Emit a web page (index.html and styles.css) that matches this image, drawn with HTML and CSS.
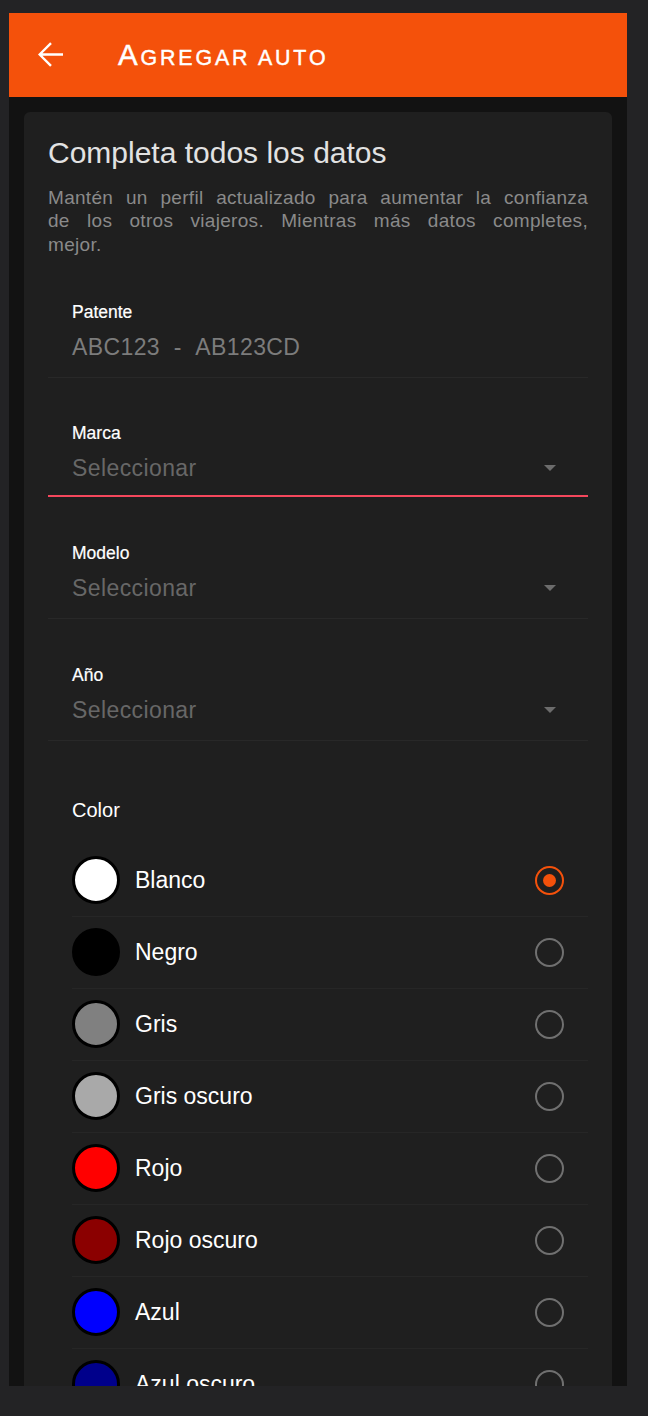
FILE: index.html
```html
<!DOCTYPE html>
<html lang="es">
<head>
<meta charset="utf-8">
<title>Agregar auto</title>
<link rel="stylesheet" href="styles.css">
</head>
<body>
<div class="frame">
  <header class="toolbar">
    <svg class="back" width="26" height="26" viewBox="0 0 26 26" aria-hidden="true">
      <path d="M1.5 12.5 H25 M13 1.2 L1.6 12.5 L13 23.8" fill="none" stroke="#fff" stroke-width="2.4" stroke-linejoin="miter"/>
    </svg>
    <h1 class="title"><span class="title-cap">A</span>gregar auto</h1>
  </header>
  <main class="content">
    <section class="card">
      <h2 class="card-title">Completa todos los datos</h2>
      <p class="card-desc">Mantén un perfil actualizado para aumentar la confianza<br>de los otros viajeros. Mientras más datos completes,<br>mejor.</p>

      <div class="field field--first">
        <div class="field-label">Patente</div>
        <div class="field-row"><span class="field-value">ABC123&nbsp; - &nbsp;AB123CD</span></div>
      </div>

      <div class="field field--focused">
        <div class="field-label">Marca</div>
        <div class="field-row"><span class="field-value field-value--placeholder">Seleccionar</span><span class="caret"></span></div>
      </div>

      <div class="field">
        <div class="field-label">Modelo</div>
        <div class="field-row"><span class="field-value field-value--placeholder">Seleccionar</span><span class="caret"></span></div>
      </div>

      <div class="field">
        <div class="field-label">Año</div>
        <div class="field-row"><span class="field-value field-value--placeholder">Seleccionar</span><span class="caret"></span></div>
      </div>

      <div class="color-label">Color</div>
      <ul class="color-list">
        <li class="color-item"><span class="swatch swatch--blanco"></span><span class="color-name">Blanco</span><span class="radio radio--checked"></span></li>
        <li class="color-item"><span class="swatch swatch--negro"></span><span class="color-name">Negro</span><span class="radio"></span></li>
        <li class="color-item"><span class="swatch swatch--gris"></span><span class="color-name">Gris</span><span class="radio"></span></li>
        <li class="color-item"><span class="swatch swatch--gris-oscuro"></span><span class="color-name">Gris oscuro</span><span class="radio"></span></li>
        <li class="color-item"><span class="swatch swatch--rojo"></span><span class="color-name">Rojo</span><span class="radio"></span></li>
        <li class="color-item"><span class="swatch swatch--rojo-oscuro"></span><span class="color-name">Rojo oscuro</span><span class="radio"></span></li>
        <li class="color-item"><span class="swatch swatch--azul"></span><span class="color-name">Azul</span><span class="radio"></span></li>
        <li class="color-item"><span class="swatch swatch--azul-oscuro"></span><span class="color-name">Azul oscuro</span><span class="radio"></span></li>
      </ul>
    </section>
  </main>
</div>
</body>
</html>
```
FILE: styles.css
```css
* { box-sizing: border-box; }

html, body {
  margin: 0;
  padding: 0;
}

body {
  background: #232325;
  font-family: "Liberation Sans", Arial, sans-serif;
  width: 648px;
  height: 1416px;
  overflow: hidden;
}

.frame {
  margin: 13px 0 0 9px;
  width: 618px;
  height: 1373px;
  overflow: hidden;
  background: #121212;
}

.toolbar {
  height: 84px;
  background: #f4510b;
  display: flex;
  align-items: center;
}

.back {
  display: block;
  margin-left: 29px;
  flex: none;
}

.title {
  margin: 0 0 0 54px;
  font-size: 21.4px;
  line-height: 1;
  font-weight: normal;
  text-transform: uppercase;
  letter-spacing: 2.85px;
  color: #ffffff;
  -webkit-text-stroke: 0.45px #ffffff;
}

.title-cap {
  font-size: 29.5px;
}

.content {
  padding: 15px 15px 0 15px;
}

.card {
  background: #1f1f1f;
  border-radius: 6px;
  padding: 23px 24px 40px 24px;
}

.card-title {
  margin: 0;
  font-size: 30px;
  line-height: 36px;
  font-weight: normal;
  color: #e2e2e2;
}

.card-desc {
  margin: 15px 0 0 0;
  font-size: 19px;
  line-height: 23.33px;
  letter-spacing: 0.3px;
  color: #8a8a8a;
  text-align: justify;
  text-align-last: justify;
}

.field {
  margin-top: 46px;
  border-bottom: 1px solid #282828;
}

.field-label {
  padding-left: 24px;
  font-size: 17.5px;
  line-height: 20px;
  color: #ffffff;
  -webkit-text-stroke: 0.2px #ffffff;
}

.field-row {
  display: flex;
  align-items: center;
  margin-top: 10px;
  padding: 0 32px 15px 24px;
}

.field-value {
  flex: 1;
  font-size: 23px;
  line-height: 30px;
  letter-spacing: 0.4px;
  color: #7c7c7c;
  white-space: pre;
}

.field-value--placeholder {
  color: #676767;
}

.caret {
  width: 0;
  height: 0;
  border-left: 6.5px solid transparent;
  border-right: 6.5px solid transparent;
  border-top: 6.5px solid #6c6c6c;
  margin-top: 1px;
}

.field--focused {
  margin-top: 45px;
  border-bottom: 2px solid #f4475c;
}

.field--focused .field-row {
  padding-bottom: 12px;
}

.color-label {
  margin-top: 57px;
  padding-left: 24px;
  font-size: 20px;
  line-height: 24px;
  color: #ffffff;
}

.color-list {
  list-style: none;
  margin: 23px 0 0 24px;
  padding: 0;
}

.color-item {
  height: 72px;
  display: flex;
  align-items: center;
  border-bottom: 1px solid #262626;
}

.swatch {
  width: 48px;
  height: 48px;
  border-radius: 50%;
  border: 3px solid #000000;
  flex: none;
}

.swatch--blanco { background: #ffffff; }
.swatch--negro { background: #000000; }
.swatch--gris { background: #808080; }
.swatch--gris-oscuro { background: #a9a9a9; }
.swatch--rojo { background: #ff0000; }
.swatch--rojo-oscuro { background: #8b0000; }
.swatch--azul { background: #0000ff; }
.swatch--azul-oscuro { background: #00008b; }

.color-name {
  margin-left: 15px;
  font-size: 23px;
  line-height: 30px;
  color: #ffffff;
}

.radio {
  margin-left: auto;
  margin-right: 24.5px;
  width: 29px;
  height: 29px;
  border-radius: 50%;
  border: 2.5px solid #707070;
  display: flex;
  align-items: center;
  justify-content: center;
  flex: none;
}

.radio--checked {
  border-color: #f4510b;
}

.radio--checked::after {
  content: "";
  width: 13px;
  height: 13px;
  border-radius: 50%;
  background: #f4510b;
}
```
